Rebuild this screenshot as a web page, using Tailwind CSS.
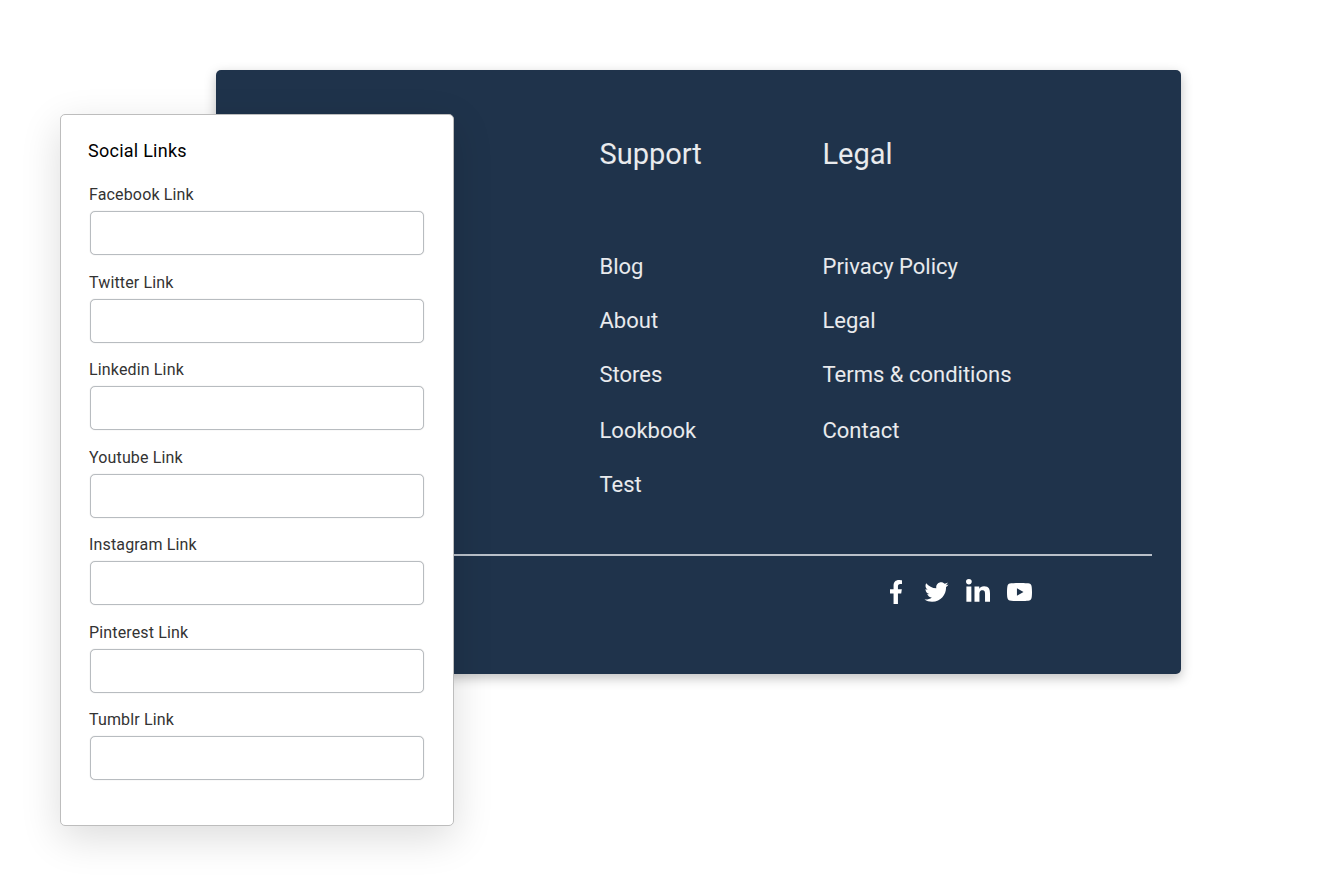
<!DOCTYPE html>
<html lang="en">
<head>
  <meta charset="UTF-8">
  <meta name="viewport" content="width=device-width, initial-scale=1.0">
  <title>Footer Social Links</title>
  <script src="https://cdn.jsdelivr.net/npm/@tailwindcss/browser@4"></script>
</head>
<body class="bg-white h-[896px] overflow-hidden relative font-['Roboto',sans-serif]">

  <!-- Footer preview -->
  <footer class="absolute left-[216px] top-[70px] w-[965px] h-[604px] bg-[#1f334b] rounded-[5px] shadow-[0_4px_12px_rgba(0,0,0,0.25)] text-white/90 pl-[383.5px] pr-[29px] pt-[64px]">
    <div class="flex">
      <div class="w-[223px]">
        <h3 class="text-[29px] leading-[40px] font-normal">Support</h3>
        <ul class="mt-[80px] text-[22px] leading-[26px] font-normal">
          <li class="h-[54px]">Blog</li>
          <li class="h-[54px]">About</li>
          <li class="h-[56px]">Stores</li>
          <li class="h-[54px]">Lookbook</li>
          <li class="h-[26px]">Test</li>
        </ul>
      </div>
      <div>
        <h3 class="text-[29px] leading-[40px] font-normal">Legal</h3>
        <ul class="mt-[80px] text-[22px] leading-[26px] font-normal">
          <li class="h-[54px]">Privacy Policy</li>
          <li class="h-[54px]">Legal</li>
          <li class="h-[56px]">Terms &amp; conditions</li>
          <li class="h-[54px]">Contact</li>
        </ul>
      </div>
    </div>

    <div class="mt-[56px] border-t-2 border-[#b9c0c9] -ml-[200px]"></div>

    <!-- Social icons -->
    <div class="flex items-center mt-[23px] ml-[289.5px] h-[26px]">
      <svg class="w-[14px] h-[24px]" viewBox="0 0 320 512" fill="#fff" preserveAspectRatio="none"><path d="M279.14 288l14.22-92.66h-88.91v-60.13c0-25.35 12.42-50.06 52.24-50.06h40.42V6.26S260.43 0 225.36 0c-73.22 0-121.08 44.38-121.08 124.72v70.62H22.89V288h81.39v224h100.17V288z"/></svg>
      <svg class="w-[25px] h-[24px] ml-[21px]" viewBox="0 0 512 512" fill="#fff"><path d="M459.37 151.716c.325 4.548.325 9.097.325 13.645 0 138.72-105.583 298.558-298.558 298.558-59.452 0-114.68-17.219-161.137-47.106 8.447.974 16.568 1.299 25.34 1.299 49.055 0 94.213-16.568 130.274-44.832-46.132-.975-84.792-31.188-98.112-72.772 6.498.974 12.995 1.624 19.818 1.624 9.421 0 18.843-1.3 27.614-3.573-48.081-9.747-84.143-51.98-84.143-102.985v-1.299c13.969 7.797 30.214 12.67 47.431 13.319-28.264-18.843-46.781-51.005-46.781-87.391 0-19.492 5.197-37.36 14.294-52.954 51.655 63.675 129.3 105.258 216.365 109.807-1.624-7.797-2.599-15.918-2.599-24.04 0-57.828 46.782-104.934 104.934-104.934 30.213 0 57.502 12.67 76.67 33.137 23.715-4.548 46.456-13.32 66.599-25.34-7.798 24.366-24.366 44.833-46.132 57.827 21.117-2.273 41.584-8.122 60.426-16.243-14.292 20.791-32.161 39.308-52.628 54.253z"/></svg>
      <svg class="w-[24px] h-[26px] ml-[17px]" viewBox="0 0 448 512" fill="#fff" preserveAspectRatio="none"><path d="M100.28 448H7.4V148.9h92.88zM53.79 108.1C24.09 108.1 0 83.5 0 53.8a53.79 53.79 0 0 1 107.58 0c0 29.7-24.1 54.3-53.79 54.3zM447.9 448h-92.68V302.4c0-34.7-.7-79.2-48.29-79.2-48.29 0-55.69 37.7-55.69 76.7V448h-92.78V148.9h89.08v40.8h1.3c12.4-23.5 42.69-48.3 87.88-48.3 94 0 111.28 61.9 111.28 142.3V448z"/></svg>
      <svg class="w-[25px] h-[18px] ml-[17px]" viewBox="15 64 546 384" fill="#fff" preserveAspectRatio="none"><path d="M549.655 124.083c-6.281-23.65-24.787-42.276-48.284-48.597C458.781 64 288 64 288 64S117.22 64 74.629 75.486c-23.497 6.322-42.003 24.947-48.284 48.597-11.412 42.867-11.412 132.305-11.412 132.305s0 89.438 11.412 132.305c6.281 23.65 24.787 41.5 48.284 47.821C117.22 448 288 448 288 448s170.78 0 213.371-11.486c23.497-6.321 42.003-24.171 48.284-47.821 11.412-42.867 11.412-132.305 11.412-132.305s0-89.438-11.412-132.305zm-317.51 213.508V175.185l142.739 81.205-142.739 81.201z"/></svg>
    </div>
  </footer>

  <!-- Social links form -->
  <form class="absolute left-[60px] top-[114px] w-[394px] h-[712px] bg-white border border-[#bdbdbd] rounded-[5px] shadow-[0_12px_40px_rgba(0,0,0,0.14)] pl-[27px] pt-[24px] font-['Roboto',sans-serif]">
    <h2 class="text-[18px] leading-[24px] text-black font-normal tracking-[0.25px]">Social Links</h2>
    <div class="mt-[20px] flex flex-col gap-[15.5px] text-[16px] leading-[24px] text-[#333] font-normal tracking-[0.15px]">
      <div>
        <label class="block pl-px">Facebook Link</label>
        <input type="text" class="block mt-[4px] ml-[2px] w-[334px] h-[44px] border border-[#b8bcc0] rounded-[5px] bg-white shadow-[0_0_1px_rgba(0,0,0,0.25)]">
      </div>
      <div>
        <label class="block pl-px">Twitter Link</label>
        <input type="text" class="block mt-[4px] ml-[2px] w-[334px] h-[44px] border border-[#b8bcc0] rounded-[5px] bg-white shadow-[0_0_1px_rgba(0,0,0,0.25)]">
      </div>
      <div>
        <label class="block pl-px">Linkedin Link</label>
        <input type="text" class="block mt-[4px] ml-[2px] w-[334px] h-[44px] border border-[#b8bcc0] rounded-[5px] bg-white shadow-[0_0_1px_rgba(0,0,0,0.25)]">
      </div>
      <div>
        <label class="block pl-px">Youtube Link</label>
        <input type="text" class="block mt-[4px] ml-[2px] w-[334px] h-[44px] border border-[#b8bcc0] rounded-[5px] bg-white shadow-[0_0_1px_rgba(0,0,0,0.25)]">
      </div>
      <div>
        <label class="block pl-px">Instagram Link</label>
        <input type="text" class="block mt-[4px] ml-[2px] w-[334px] h-[44px] border border-[#b8bcc0] rounded-[5px] bg-white shadow-[0_0_1px_rgba(0,0,0,0.25)]">
      </div>
      <div>
        <label class="block pl-px">Pinterest Link</label>
        <input type="text" class="block mt-[4px] ml-[2px] w-[334px] h-[44px] border border-[#b8bcc0] rounded-[5px] bg-white shadow-[0_0_1px_rgba(0,0,0,0.25)]">
      </div>
      <div>
        <label class="block pl-px">Tumblr Link</label>
        <input type="text" class="block mt-[4px] ml-[2px] w-[334px] h-[44px] border border-[#b8bcc0] rounded-[5px] bg-white shadow-[0_0_1px_rgba(0,0,0,0.25)]">
      </div>
    </div>
  </form>

</body>
</html>
